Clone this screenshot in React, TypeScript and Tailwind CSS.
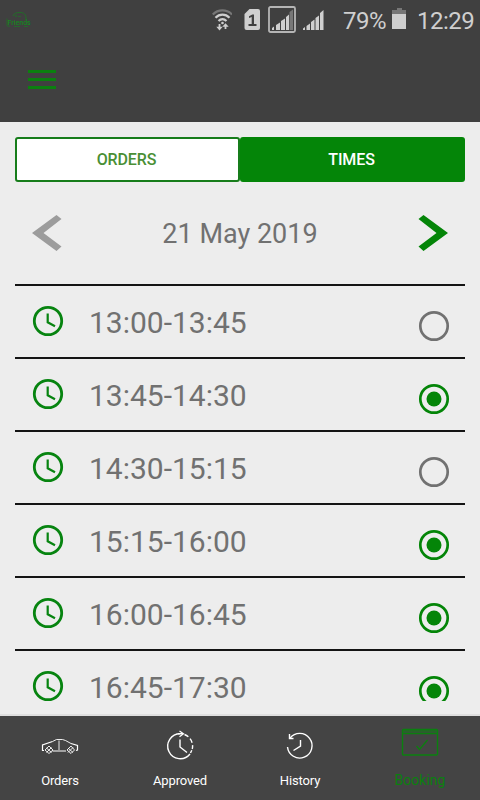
import { useState } from 'react';
import clsx from 'clsx';

interface Slot {
  time: string;
  selected: boolean;
}

const initialSlots: Slot[] = [
  { time: '13:00-13:45', selected: false },
  { time: '13:45-14:30', selected: true },
  { time: '14:30-15:15', selected: false },
  { time: '15:15-16:00', selected: true },
  { time: '16:00-16:45', selected: true },
  { time: '16:45-17:30', selected: true },
];

function StatusBar() {
  return (
    <div className="flex h-10 items-center text-[#cfcfcf]">
      <svg className="ml-1.5 h-5 w-6 overflow-visible" viewBox="0 0 24 20" fill="none" stroke="#1a7a22" strokeWidth="0.8">
        <path d="M7 6C8 3 11 2.500 14 2.500c4 0 6 2 6 5.500v2" />
        <path d="M9 6h2M10 5v2M12 6.500h3" strokeWidth="0.600" />
        <text x="1.500" y="14.500" fontFamily="Roboto" fontSize="7" fontWeight="500" fill="#16861f" stroke="none">Friends</text>
        <path d="M1 8.500v7q1 1.500 3 .5M8 16.500h6M18 16.500h4" strokeWidth="0.700" />
      </svg>
      <svg className="ml-[182px] h-6 w-5" viewBox="0 0 20 24" fill="none" stroke="currentColor" strokeWidth="2.200">
        <path d="M.8 6.500C6 1 15 1 20 6.500" stroke="#777" />
        <path d="M3.500 9.800c4-4.200 10-4.200 14 0M6.500 13c2.500-2.500 5.500-2.500 8 0" />
        <circle cx="10.500" cy="15" r="1.300" fill="currentColor" stroke="none" />
        <path d="M7.500 16v4M13.500 21v-4" strokeWidth="1.800" />
        <path d="M4.300 18.800h6.400L7.500 22.500zM10.300 18.700h6.400l-3.200-3.500z" fill="currentColor" stroke="none" />
      </svg>
      <svg className="ml-3 h-[22px] w-4" viewBox="0 0 16 22">
        <path d="M5.500 0H14q2 0 2 2v17q0 2-2 2H2.500q-2 0-2-2V5z" fill="currentColor" />
        <path d="M5 7.300 8.300 5.500H10V16H7.700V8L5 9z" fill="#404040" />
        <path d="M4.500 15h8v2h-8z" fill="#404040" />
      </svg>
      <svg className="ml-2 h-7 w-7" viewBox="0 0 28 28" fill="currentColor">
        <rect x="1" y="1" width="26" height="25" rx="1.500" fill="none" stroke="#b5b5b5" strokeWidth="1.800" />
        <path d="M4 24v-2l2-1.500V24zM8 24v-5l4-2.500V24zM13 24v-9l4-2.500V24zM18 24V11l3-2.500V24z" />
        <path d="M21.500 24V6L25 3.500V24z" fill="#777" />
      </svg>
      <svg className="ml-1.5 h-[22px] w-[22px]" viewBox="0 0 22 22" fill="currentColor">
        <path d="M1 21v-1.500L3 18v3zM4.500 21v-4L8 14.500V21zM9 21v-8l3.500-2.500V21zM13.500 21V9L17 6.500V21zM18 21V4l3.500-3v20z" />
      </svg>
      <span className="ml-[19px] w-[44px] pt-0.5 text-[24px] tracking-[-0.5px]">79%</span>
      <svg className="ml-[5px] mb-0.5 h-[22px] w-[15px]" viewBox="0 0 15 22">
        <path d="M5 0h5v2h4v4H0V2h5z" fill="#777" />
        <path d="M0 6h14v15H0z" fill="currentColor" />
      </svg>
      <span className="ml-[10px] pt-0.5 text-[24px] tracking-[-0.5px]">12:29</span>
    </div>
  );
}

function ClockIcon() {
  return (
    <svg className="mb-0.5 size-8" viewBox="0 0 32 32" fill="none" stroke="#078410">
      <circle cx="16" cy="16" r="13.700" strokeWidth="2.800" />
      <path d="M15.700 8.500v8.800l7.300 3.900" strokeWidth="2.200" />
    </svg>
  );
}

function Radio({ selected }: { selected: boolean }) {
  return (
    <svg className="size-8" viewBox="0 0 32 32" fill="none">
      <circle cx="16" cy="16" r="13.700" stroke={selected ? '#048508' : '#717171'} strokeWidth="2.700" />
      {selected && <circle cx="16" cy="16" r="7.500" fill="#048508" />}
    </svg>
  );
}

function CarIcon() {
  return (
    <svg className="h-9 w-[38px]" viewBox="0 0 38 36" fill="none" stroke="currentColor">
      <path d="M3 23.500H1.500v-5.500l10-3.500" strokeWidth="1.200" />
      <path d="m11.500 14.500 4-2h6l3 1 5.500 3" strokeWidth="0.900" />
      <path d="m30 16.500 6.500 2v4.500l-1.500.5M11.500 24h13.500" strokeWidth="1.200" />
      <path d="M18 13.500V23" strokeWidth="0.900" />
      <path d="m4 23 4-4 4 4-4 3.500zM5.500 21l5 4.500M5.500 25.500l5-5M26 23l4-4 3.500 4-3.500 3.500zM27 21l5 4.500M27 25.500l5-5" strokeWidth="0.900" />
    </svg>
  );
}

function ApprovedIcon() {
  return (
    <svg className="h-9 w-8" viewBox="0 0 32 36" fill="none" stroke="currentColor" strokeWidth="1.400">
      <path d="M16.500 6.700A12.500 12.500 0 1 0 26 27" />
      <path d="M20.500 7.500a12.500 12.500 0 0 1 7.800 14.500" strokeDasharray="4.500 2.500" />
      <path d="M27.800 23.200 26.500 26" />
      <path d="M16 12.500V20l7 5.500" />
      <path d="m15.500 4 4 2.800-4 3M14 6.700h5" strokeWidth="1.200" />
    </svg>
  );
}

function HistoryIcon() {
  return (
    <svg className="h-9 w-8" viewBox="0 0 32 36" fill="none" stroke="currentColor" strokeWidth="1.400">
      <path d="M6 11.200A12.300 12.300 0 1 1 3.500 20" />
      <path d="M5.500 7v4.500h4" />
      <path d="M16.500 13v6L9.500 23.500" />
    </svg>
  );
}

function BookingIcon() {
  return (
    <svg className="h-9 w-[38px]" viewBox="0 0 38 36" fill="none" stroke="currentColor">
      <rect x="1.500" y="2.500" width="35" height="25.500" rx="1" strokeWidth="1.400" />
      <path d="M2 6.500h34" strokeWidth="1.600" />
      <path d="M2 4h34" strokeWidth="2.500" opacity="0.500" />
      <path d="m15.500 19 3 3.500 8-9.500" strokeWidth="1.300" />
    </svg>
  );
}

const tabs = [
  { label: 'Orders', Icon: CarIcon },
  { label: 'Approved', Icon: ApprovedIcon },
  { label: 'History', Icon: HistoryIcon },
  { label: 'Booking', Icon: BookingIcon },
];

export default function App() {
  const [slots, setSlots] = useState(initialSlots);

  const toggleSlot = (index: number) => {
    setSlots(slots.map((slot, i) => (i === index ? { ...slot, selected: !slot.selected } : slot)));
  };

  return (
    <div className="flex h-[800px] w-[480px] flex-col overflow-hidden bg-[#ededed] font-['Roboto',sans-serif]">
      {/* Header */}
      <header className="h-[122px] shrink-0 bg-[#404040]">
        <StatusBar />
        <button className="ml-7 mt-[30px] flex w-7 flex-col gap-[5px]">
          <span className="h-[3px] w-full bg-[#0b800f]" />
          <span className="h-[3px] w-full bg-[#0b800f]" />
          <span className="h-[3px] w-full bg-[#0b800f]" />
        </button>
      </header>

      <main className="flex h-[592px] shrink-0 flex-col overflow-hidden px-[15px] pt-[15px]">
        {/* Orders / Times switch */}
        <div className="grid h-[45px] shrink-0 grid-cols-2 text-[16px] font-medium tracking-[-0.1px]">
          <button className="rounded-[3px] border-2 border-[#177d1b] bg-white pr-0.5 text-[#4a8f35]">ORDERS</button>
          <button className="rounded-[3px] bg-[#048508] pr-0.5 text-white">TIMES</button>
        </div>

        {/* Date picker */}
        <div className="flex h-[102px] shrink-0 items-center justify-between px-4">
          <svg className="h-10 w-8" viewBox="0 0 32 40" fill="#9c9c9c">
            <path d="m25.500 2 5 4L12.500 20l18 13.500-5 4.500L1 20z" />
          </svg>
          <span className="pt-0.5 text-[27px] text-[#717171]">21 May 2019</span>
          <svg className="h-10 w-8" viewBox="0 0 32 40" fill="#048508">
            <path d="m6.500 2-5 4 18 14-18 13.500 5 4.500L31 20z" />
          </svg>
        </div>

        {/* Time slots */}
        {slots.map((slot, index) => (
          <button
            key={slot.time}
            onClick={() => toggleSlot(index)}
            className="flex h-[73px] shrink-0 items-center border-t-2 border-[#141414] pl-[17px] pr-[15px] text-left"
          >
            <ClockIcon />
            <span className="ml-[25px] mt-[3px] flex-1 text-[30px] leading-9 text-[#717171]">{slot.time}</span>
            <span className="mt-[9px] h-8">
              <span className={clsx('block overflow-hidden', index === slots.length - 1 ? 'h-[26px]' : 'h-8')}>
                <Radio selected={slot.selected} />
              </span>
            </span>
          </button>
        ))}
      </main>

      {/* Bottom navigation */}
      <nav className="mt-auto grid h-[86px] shrink-0 grid-cols-4 border-t-2 border-[#dfdfdf] bg-[#444444] text-[13px]">
        {tabs.map(({ label, Icon }) => (
          <button
            key={label}
            className={clsx(
              'flex flex-col items-center pt-[11px]',
              label === 'Booking' ? 'text-[14px] text-[#0b800f]' : 'tracking-[-0.15px] text-white'
            )}
          >
            <Icon />
            <span className={clsx('leading-5', label === 'Booking' ? 'mt-[7px]' : 'mt-2')}>{label}</span>
          </button>
        ))}
      </nav>
    </div>
  );
}
